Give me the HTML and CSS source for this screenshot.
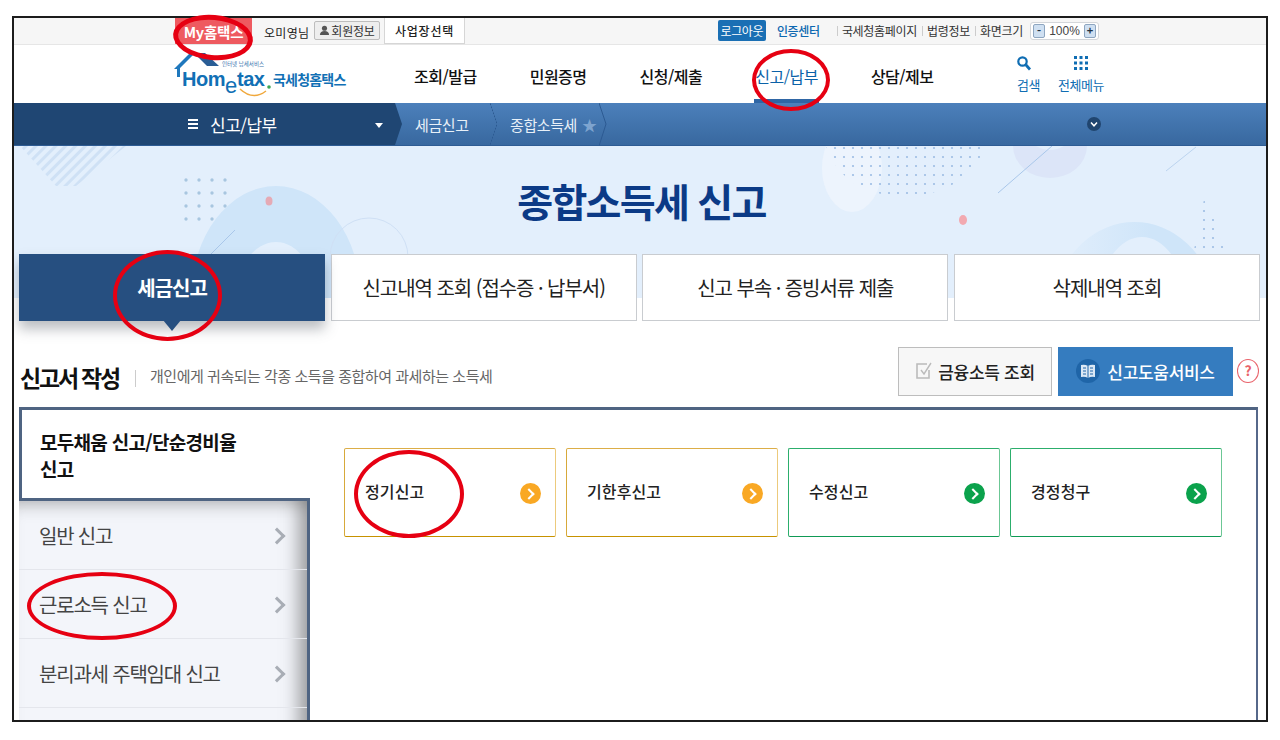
FILE: index.html
```html
<!DOCTYPE html>
<html lang="ko">
<head>
<meta charset="utf-8">
<title>종합소득세 신고</title>
<link rel="stylesheet" href="styles.css">
</head>
<body>
<div class="page">
  <div class="frame">
    <div class="topbar">
      <a class="my">My홈택스</a>
      <span class="user">오미영님</span>
      <a class="member"><svg class="member-ico" viewBox="0 0 12 12"><circle cx="6" cy="3.5" r="2.8"/><path d="M1 11c0-3 2-4.500 5-4.500s5 1.500 5 4.500z"/></svg>회원정보</a>
      <a class="biz">사업장선택</a>
      <div class="topright">
        <a class="logout">로그아웃</a>
        <a class="cert">인증센터</a>
        <a class="toplink first">국세청홈페이지</a>
        <a class="toplink">법령정보</a>
        <a class="toplink">화면크기</a>
        <div class="zoomctl"><b class="zbtn">-</b><span class="zval">100%</span><b class="zbtn">+</b></div>
      </div>
    </div>

    <div class="navbar">
      <svg class="logo" viewBox="0 0 176 50" width="176" height="50">
        <path d="M-1 15 L15 -1 H20 L5 14 V23 H2 V15z" fill="#1f78bd"/>
        <path d="M19 -1 H30 L44 12 H32z" fill="#2a5d95"/>
        <text class="logo-small" x="47" y="12">인터넷 납세서비스</text>
        <text class="logo-main" x="7" y="32">Hom</text>
        <text class="logo-e" x="50" y="39">e</text>
        <text class="logo-main" x="62" y="32">tax</text>
        <circle cx="94" cy="33" r="1.800" fill="#3aa655"/>
        <path d="M65 35 Q78 47 91 37" fill="none" stroke="#f0a83c" stroke-width="1.500"/>
        <text class="logo-kr" x="98" y="31">국세청홈택스</text>
      </svg>
      <nav class="gnb">
        <a class="gnb-item">조회/발급</a>
        <a class="gnb-item">민원증명</a>
        <a class="gnb-item">신청/제출</a>
        <a class="gnb-item on">신고/납부</a>
        <a class="gnb-item">상담/제보</a>
      </nav>
      <div class="tools">
        <a class="tool tool-search">
          <svg viewBox="0 0 16 16" width="16" height="16"><circle cx="6.500" cy="6.500" r="4.200" fill="none" stroke="#0f6db3" stroke-width="2.200"/><path d="M9.800 9.800 L14 14.500" stroke="#0f6db3" stroke-width="2.800"/></svg>
          <span>검색</span>
        </a>
        <a class="tool tool-all">
          <svg viewBox="0 0 14 16" width="14" height="16"><g fill="#0f6db3"><rect x="0" y="1" width="3" height="3"/><rect x="5.500" y="1" width="3" height="3"/><rect x="11" y="1" width="3" height="3"/><rect x="0" y="6.500" width="3" height="3"/><rect x="5.500" y="6.500" width="3" height="3"/><rect x="11" y="6.500" width="3" height="3"/><rect x="0" y="12" width="3" height="3"/><rect x="5.500" y="12" width="3" height="3"/><rect x="11" y="12" width="3" height="3"/></g></svg>
          <span>전체메뉴</span>
        </a>
      </div>
    </div>

    <div class="crumbs">
      <div class="crumb-main">
        <span class="burger"><i></i><i></i><i></i></span>
        <span class="crumb-title">신고/납부</span>
        <span class="caret"></span>
      </div>
      <a class="crumb c1">세금신고</a>
      <a class="crumb c2">종합소득세<span class="star">★</span></a>
      <svg class="crumb-end" viewBox="0 0 10 43" width="10" height="43"><path d="M0 0 L7 21 L0 43" fill="none" stroke="#2c5a92" stroke-width="1"/></svg>
      <span class="more"><svg viewBox="0 0 14 14" width="14" height="14"><circle cx="7" cy="7" r="7" fill="#20456f"/><path d="M4 5.500 L7 8.800 L10 5.500" fill="none" stroke="#fff" stroke-width="1.500"/></svg></span>
    </div>

    <section class="hero">
      <svg class="hero-art" viewBox="0 0 1252 152" width="1252" height="152">
        <defs>
          <pattern id="dots" width="9" height="9" patternUnits="userSpaceOnUse"><circle cx="2" cy="2" r="1.100" fill="#9dbde4"/></pattern>
          <pattern id="dots2" width="13" height="13" patternUnits="userSpaceOnUse" patternTransform="translate(-1 4)"><circle cx="4" cy="4" r="1.700" fill="#a8c6e0"/></pattern>
          <pattern id="hatch" width="7" height="7" patternUnits="userSpaceOnUse" patternTransform="rotate(45)"><rect width="3" height="7" fill="#cfe1f5"/></pattern>
          <linearGradient id="fade" x1="0" x2="1" y1="0" y2="0"><stop offset="0" stop-color="#cfe5f9" stop-opacity="0"/><stop offset=".6" stop-color="#cfe5f9"/></linearGradient>
        </defs>
        <path d="M6 0 H112 L62 40 H42z" fill="url(#hatch)"/>
        <rect x="170" y="30" width="50" height="46" fill="url(#dots2)"/>
        <path d="M177 152 A85 112 0 0 1 347 152 H302 A40 56 0 0 0 222 152z" fill="#cfe5f9"/>
        <ellipse cx="255" cy="55" rx="3.500" ry="4.500" fill="#e5aab5"/>
        <path d="M221 84 L194 111" stroke="#a9c7ea" stroke-width="1"/>
        <circle cx="355" cy="111" r="39" fill="none" stroke="#cfe0f5" stroke-width="1"/>
        <ellipse cx="838" cy="22" rx="30" ry="44" fill="#edf4fd"/>
        <path d="M812 0 H972 Q950 50 890 50 Q830 50 812 0z" fill="url(#dots)"/>
        <path d="M999 0 A37 32 0 0 0 1073 0 H1050 Q1036 8 1022 0z" fill="#dce5f8"/>
        <path d="M1038 0 L984 47" stroke="#a9c7ea" stroke-width="1"/>
        <path d="M1182 1 L1152 25" stroke="#bcd4ef" stroke-width="1"/>
        <ellipse cx="949" cy="74" rx="4" ry="5" fill="#f2a9b0"/>
        <path d="M1038 152 A85 100 0 0 1 1203 152 H1170 A42 61 0 0 0 1086 152z" fill="url(#fade)"/>
        <path d="M1191 48 L1176 124 H1218z" fill="url(#dots)"/>
      </svg>
      <h1 class="hero-title">종합소득세 신고</h1>
      <div class="tabs">
        <a class="tab on">세금신고</a>
        <a class="tab">신고내역 조회 (접수증 · 납부서)</a>
        <a class="tab">신고 부속 · 증빙서류 제출</a>
        <a class="tab">삭제내역 조회</a>
      </div>
    </section>

    <div class="headrow">
      <h2 class="head-title">신고서 작성</h2>
      <p class="head-desc">개인에게 귀속되는 각종 소득을 종합하여 과세하는 소득세</p>
      <a class="btn btn-ghost"><svg viewBox="0 0 18 20" width="18" height="20"><path d="M14 9 V17 H2 V3 H12" fill="none" stroke="#bbb" stroke-width="1.600"/><path d="M6 9 L9 13 L16 2" fill="none" stroke="#bbb" stroke-width="1.400"/></svg>금융소득 조회</a>
      <a class="btn btn-blue"><span class="book"><svg viewBox="0 0 16 14" width="16" height="14"><path d="M1 1 Q5 0 8 2 Q11 0 15 1 V13 Q11 12 8 14 Q5 12 1 13z" fill="#dbe8f5"/><path d="M8 2 V14 M3 4 H6 M3 7 H6 M3 10 H6 M10 4 H13 M10 7 H13 M10 10 H13" stroke="#1f65a8" stroke-width="1"/></svg></span>신고도움서비스</a>
      <a class="help">?</a>
    </div>

    <div class="panel">
      <aside class="side">
        <div class="side-active">모두채움 신고/단순경비율<br>신고</div>
        <ul class="side-list">
          <li class="side-item">일반 신고</li>
          <li class="side-item">근로소득 신고</li>
          <li class="side-item">분리과세 주택임대 신고</li>
          <li class="side-item">&nbsp;</li>
        </ul>
      </aside>
      <div class="cards">
        <a class="card amber">정기신고<span class="go"></span></a>
        <a class="card amber">기한후신고<span class="go"></span></a>
        <a class="card green">수정신고<span class="go"></span></a>
        <a class="card green">경정청구<span class="go"></span></a>
      </div>
    </div>
  </div>

  <span class="mark mark-my"></span>
  <span class="mark mark-nav"></span>
  <span class="mark mark-tab"></span>
  <span class="mark mark-card"></span>
  <span class="mark mark-side"></span>
</div>
</body>
</html>
```
FILE: styles.css
```css
* { box-sizing: border-box; }
html, body { margin: 0; padding: 0; background: #fff; }
body { font-family: "Noto Sans CJK KR", "Noto Sans", sans-serif; color: #111; overflow: hidden; }
a { color: inherit; text-decoration: none; }
h1, h2, p, ul { margin: 0; padding: 0; }
ul { list-style: none; }

.page { position: relative; width: 1280px; height: 740px; padding: 16px 12px 0; }
.frame { height: 706px; border: 2px solid #1c1c1c; overflow: hidden; background: #fff; }

/* top bar */
.topbar { display: flex; align-items: flex-start; height: 27px; padding-left: 161px; background: #f6f6f6; border-bottom: 1px solid #e6e6e6; font-size: 12px; }
.my { width: 77px; height: 26px; background: #ee5a60; color: #fff; font-size: 14.500px; font-weight: 700; display: flex; align-items: center; justify-content: center; letter-spacing: -.2px; }
.user { margin-left: 12px; height: 30px; line-height: 30px; width: 46px; color: #222; letter-spacing: .3px; white-space: nowrap; }
.member { margin: 3px 0 0 4px; width: 66px; height: 19px; border: 1px solid #bdbdbd; border-radius: 2px; background: #eee; display: flex; align-items: center; justify-content: center; color: #333; letter-spacing: -.2px; font-size: 12px; }
.member-ico { width: 11px; height: 11px; fill: #555; margin-right: 1px; }
.biz { margin-left: 4px; width: 81px; height: 26px; background: #fff; border: 1px solid #d6d6d6; border-top: 0; display: flex; align-items: center; justify-content: center; color: #222; font-weight: 500; letter-spacing: .8px; }
.topright { margin-left: auto; padding: 2px 167px 0 0; display: flex; align-items: flex-start; }
.logout { width: 48px; height: 21px; background: #1a6fb4; border-radius: 2px; color: #fff; text-align: center; line-height: 21px; letter-spacing: -.4px; }
.cert { margin-left: 11px; width: 50px; line-height: 21px; color: #0c68b1; font-weight: 500; letter-spacing: -.3px; white-space: nowrap; }
.toplink { position: relative; margin-left: 10px; line-height: 21px; color: #333; letter-spacing: -.3px; white-space: nowrap; }
.toplink.first { margin-left: 15px; }
.toplink::before { content: ""; position: absolute; left: -5px; top: 6px; width: 1px; height: 10px; background: #ccc; }
.zoomctl { margin: 2px 0 0 7px; width: 69px; height: 18px; padding: 1px 2px; display: flex; align-items: center; justify-content: space-between; background: #fff; border: 1px solid #d3d6da; border-radius: 3px; }
.zbtn { width: 12px; height: 14px; background: #cfe0f2; border: 1px solid #8ea6c0; border-radius: 2px; font-size: 11px; line-height: 11px; text-align: center; color: #234; }
.zval { font-family: "Liberation Sans", sans-serif; font-size: 12px; color: #444; }

/* main nav */
.navbar { display: flex; height: 58px; padding: 9px 0 0 161px; background: #fff; }
.logo { flex: none; overflow: visible; position: relative; }
.logo-small { font-size: 5.500px; fill: #3a74ad; }
.logo-main { font-family: "Liberation Sans", sans-serif; font-size: 20px; font-weight: 700; fill: #1170b5; letter-spacing: -.5px; }
.logo-e { font-family: "Liberation Sans", sans-serif; font-size: 22px; font-weight: 400; fill: #1170b5; }
.logo-kr { font-size: 14px; font-weight: 700; fill: #1170b5; letter-spacing: -.8px; }
.gnb { display: flex; margin-left: 62px; width: 524px; gap: 51px; }
.gnb-item { height: 49px; line-height: 45px; font-size: 16px; font-weight: 500; color: #111; letter-spacing: -.5px; white-space: nowrap; border-bottom: 4px solid transparent; padding: 0 1px; }
.gnb-item.on { color: #0b62a8; font-weight: 400; border-bottom-color: #2f66a5; }
.tools { display: flex; margin-left: 79px; gap: 17px; }
.tool { display: flex; flex-direction: column; align-items: center; font-size: 13px; color: #0f6db3; letter-spacing: -.5px; white-space: nowrap; }
.tool svg { margin-top: 1px; }
.tool-search svg { margin-right: 9px; }
.tool span { margin-top: 5px; line-height: 18px; }

/* breadcrumb bar */
.crumbs { display: flex; height: 43px; background: linear-gradient(#4c80bb, #38689f); border-bottom: 1px solid #2e5c94; color: #e8f0f8; font-size: 15px; }
.crumb-main { position: relative; display: flex; align-items: center; width: 388px; padding-left: 174px; background: #1f4673; clip-path: polygon(0 0, 381px 0, 388px 50%, 381px 100%, 0 100%); color: #fff; }
.burger { display: flex; flex-direction: column; gap: 2px; width: 10px; }
.burger i { display: block; height: 2px; background: #fff; }
.crumb-title { margin-left: 12px; font-size: 17px; letter-spacing: -.5px; }
.caret { position: absolute; left: 361px; top: 20px; border: 4px solid transparent; border-top: 5px solid #fff; border-bottom: 0; }
.crumb { position: relative; display: flex; align-items: center; height: 42px; letter-spacing: -.4px; white-space: nowrap; }
.crumb.c1 { margin-left: 13px; width: 95px; }
.crumb.c1::after { content: ""; position: absolute; right: 13px; top: 0; width: 7px; height: 100%; background: linear-gradient(to top right, transparent 47%, #2c5a92 50%, transparent 55%) top / 100% 50% no-repeat, linear-gradient(to bottom right, transparent 47%, #2c5a92 50%, transparent 55%) bottom / 100% 50% no-repeat; }
.star { margin-left: 5px; color: #7ea4cf; font-size: 15px; }
.crumb-end { margin-left: 2px; }
.more { margin-left: 478px; display: flex; align-items: center; }

/* hero */
.hero { position: relative; height: 176px; padding: 0 6px 0 5px; background: linear-gradient(#e3effc 152px, #fff 152px); }
.hero-art { position: absolute; left: 0; top: 0; }
.hero-title { position: relative; height: 108px; padding-top: 24px; text-align: center; font-size: 39px; line-height: 60px; font-weight: 700; color: #0b3a86; letter-spacing: -1.700px; margin-right: -4px; }
.tabs { position: relative; display: grid; grid-template-columns: repeat(4, 1fr); gap: 5.500px; height: 67px; }
.tab { display: flex; align-items: center; justify-content: center; background: #fff; border: 1px solid #c9ccd0; font-size: 20px; letter-spacing: -1.050px; color: #222; }
.tab.on { position: relative; background: #264f80; border-color: #264f80; color: #fff; font-weight: 700; font-size: 20px; box-shadow: 0 8px 12px rgba(60, 70, 80, .35); }
.tab.on::after { content: ""; position: absolute; left: 143px; top: 100%; border: 9px solid transparent; border-top: 11px solid #264f80; border-bottom: 0; }

/* heading row */
.headrow { display: flex; align-items: center; height: 50px; margin-top: 24px; padding-left: 6px; }
.head-title { font-size: 23px; font-weight: 700; letter-spacing: -2.200px; white-space: nowrap; width: 116px; margin-top: 12px; color: #111; }
.head-desc { position: relative; margin: 8px 0 0 14px; font-size: 15px; color: #666; letter-spacing: -.47px; white-space: nowrap; }
.head-desc::before { content: ""; position: absolute; left: -15px; top: 5px; width: 1px; height: 17px; background: #ccc; }
.btn { display: flex; align-items: center; justify-content: center; height: 49px; font-size: 17px; font-weight: 500; letter-spacing: -.3px; white-space: nowrap; }
.btn-ghost { margin-left: auto; width: 154px; background: #f7f7f7; border: 1px solid #bdbdbd; color: #222; gap: 5px; }
.btn-blue { margin-left: 6px; width: 175px; background: #357cbf; color: #fff; gap: 7px; }
.book { width: 24px; height: 24px; border-radius: 50%; background: #1f65a8; display: flex; align-items: center; justify-content: center; }
.help { margin: 0 7px 0 4px; width: 22px; height: 24px; border: 1.500px solid #e9626a; border-radius: 50%; color: #e9626a; text-align: center; font-size: 14px; line-height: 21px; font-weight: 700; }

/* panel */
.panel { display: flex; height: 340px; margin: 11px 8px 0 5px; border-top: 3px solid #4f6482; border-right: 2px solid #56688a; }
.side { flex: none; width: 291px; }
.side-active { height: 88px; padding: 18px 0 0 18px; border-left: 3px solid #4f6482; font-size: 19px; line-height: 27px; font-weight: 700; letter-spacing: -.7px; color: #111; white-space: nowrap; }
.side-list { background: #f3f5fa; border-top: 3px solid #4f6482; border-right: 3px solid #4f6482; box-shadow: inset -22px 0 18px -14px rgba(80, 80, 80, .55), inset 0 16px 16px -12px rgba(90, 90, 90, .4); height: 260px; }
.side-item { position: relative; height: 69px; padding: 0 0 0 20px; display: flex; align-items: center; font-size: 20px; color: #444; letter-spacing: -1.200px; border-bottom: 1px solid #e4e6ec; }
.side-item::after { content: ""; position: absolute; left: 252px; top: 29px; width: 9px; height: 9px; border-top: 3px solid #a8adb5; border-right: 3px solid #a8adb5; transform: rotate(45deg); }
.side-item:last-child::after { display: none; }
.cards { flex: 1; display: flex; gap: 10px; padding: 38px 0 0 34px; align-items: flex-start; }
.card { position: relative; flex: none; width: 212px; height: 89px; padding: 0 0 4px 20px; display: flex; align-items: center; border: 1px solid; border-radius: 2px; font-size: 16px; font-weight: 500; letter-spacing: .1px; color: #222; }
.card.amber { border-color: #dcae48 #ecca7c #c79200 #d7a93a; }
.card.green { border-color: #2cae6c #6cc795 #0f9a55 #2cae6c; }
.go { position: absolute; right: 14px; top: 34px; width: 21px; height: 21px; border-radius: 50%; }
.amber .go { background: #f9a824; }
.green .go { background: #0ba24c; }
.go::after { content: ""; position: absolute; left: 5px; top: 7px; width: 6px; height: 6px; border-top: 2px solid #fff; border-right: 2px solid #fff; transform: rotate(45deg); }

/* red hand-drawn annotations */
.mark { position: absolute; border: 4px solid #e60012; border-radius: 50%; pointer-events: none; }
.mark-my { left: 173px; top: 15px; width: 80px; height: 45px; border-width: 5px; transform: rotate(5deg); }
.mark-nav { left: 752px; top: 49px; width: 78px; height: 62px; }
.mark-tab { left: 113px; top: 250px; width: 109px; height: 91px; }
.mark-card { left: 354px; top: 450px; width: 110px; height: 88px; }
.mark-side { left: 27px; top: 572px; width: 150px; height: 68px; }
```
